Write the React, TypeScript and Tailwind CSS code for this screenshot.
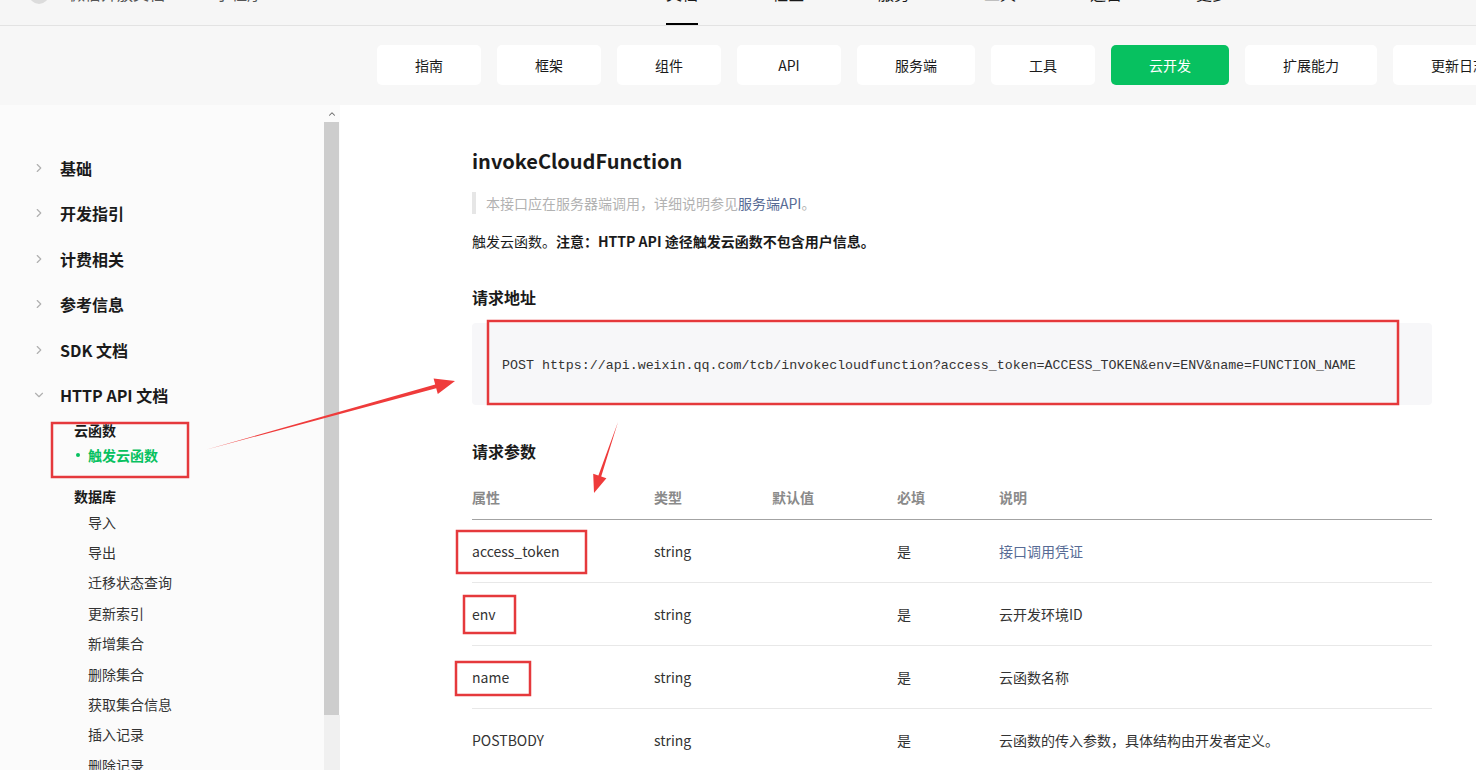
import { ChevronRight, ChevronDown, ChevronUp } from 'lucide-react';

const TABS = ['指南', '框架', '组件', 'API', '服务端', '工具', '云开发', '扩展能力', '更新日志'];
const TOP_NAV = ['文档', '社区', '服务', '工具', '运营', '更多'];
const SIDE_TOP = ['基础', '开发指引', '计费相关', '参考信息', 'SDK 文档'];
const DB_ITEMS = ['导入', '导出', '迁移状态查询', '更新索引', '新增集合', '删除集合', '获取集合信息', '插入记录', '删除记录', '更新记录'];

const PARAMS = [
  { name: 'access_token', type: 'string', req: '是', desc: '接口调用凭证', link: true },
  { name: 'env', type: 'string', req: '是', desc: '云开发环境ID', link: false },
  { name: 'name', type: 'string', req: '是', desc: '云函数名称', link: false },
  { name: 'POSTBODY', type: 'string', req: '是', desc: '云函数的传入参数，具体结构由开发者定义。', link: false },
];

function Header() {
  return (
    <header className="h-[26px] border-b border-[#e3e3e3] bg-[#f6f6f6] overflow-hidden flex">
      {/* logo, mostly scrolled out of view */}
      <div className="w-[666px] shrink-0 flex items-start h-[25px]">
        <div className="ml-[29px] -mt-[16px] w-[20px] h-[20px] rounded-full bg-[#dcdcdc]" />
        <span className="ml-[20px] -mt-[19px] leading-[24px] text-[16px] text-[#555]">微信开放文档</span>
        <span className="ml-[50px] -mt-[19px] leading-[24px] text-[16px] text-[#555]">小程序</span>
      </div>
      <nav className="flex gap-[74px]">
        {TOP_NAV.map((label, i) => (
          <div key={label} className="relative h-[25px] w-[32px]">
            <span className="block -mt-[19px] leading-[24px] text-[16px] text-[#1a1a1a]">{label}</span>
            {i === 0 && <span className="absolute left-0 bottom-0 w-[32px] h-[2px] bg-black" />}
          </div>
        ))}
      </nav>
    </header>
  );
}

function TabBar() {
  return (
    <div className="h-[79px] bg-[#f7f7f7] pt-[19px] overflow-hidden">
      <div className="flex gap-[16px] pl-[377px] w-max">
        {TABS.map((t) => (
          <div
            key={t}
            className={
              t === '云开发'
                ? 'h-[40px] min-w-[104px] px-[38px] rounded-[5px] bg-[#07c160] text-white text-[14px] flex items-center justify-center'
                : 'h-[40px] min-w-[104px] px-[38px] rounded-[5px] bg-white text-[#1a1a1a] text-[14px] flex items-center justify-center'
            }
          >
            {t}
          </div>
        ))}
      </div>
    </div>
  );
}

function Sidebar() {
  return (
    <aside className="w-[340px] shrink-0 flex bg-[#fbfbfb] overflow-hidden">
      <div className="w-[324px] pt-[40px]">
        {SIDE_TOP.map((label) => (
          <div key={label} className="h-[45.5px] flex items-center">
            <ChevronRight className="ml-[32px] w-[14px] h-[14px] text-[#b0b0b0]" strokeWidth={2} />
            <span className="ml-[14px] text-[16px] font-bold text-[#1a1a1a]">{label}</span>
          </div>
        ))}
        <div className="h-[45.5px] flex items-center">
          <ChevronDown className="ml-[32px] w-[14px] h-[14px] text-[#b0b0b0]" strokeWidth={2} />
          <span className="ml-[14px] text-[16px] font-bold text-[#1a1a1a]">HTTP API 文档</span>
        </div>
        <div className="pl-[74px]">
          <div className="h-[24px] leading-[24px] text-[14px] font-bold text-[#1a1a1a]">云函数</div>
          <div className="h-[26px] flex items-center text-[14px] font-bold text-[#07c160]">
            <span className="w-[4px] h-[4px] ml-[2px] rounded-full bg-[#07c160]" />
            <span className="ml-[8px]">触发云函数</span>
          </div>
          <div className="mt-[17px] h-[22px] leading-[22px] text-[14px] font-bold text-[#1a1a1a]">数据库</div>
          <div className="pl-[14px]">
            {DB_ITEMS.map((s) => (
              <div key={s} className="h-[30.4px] flex items-center text-[14px] text-[#333]">
                {s}
              </div>
            ))}
          </div>
        </div>
      </div>
      {/* scrollbar */}
      <div className="w-[16px] flex flex-col">
        <div className="h-[17px] flex items-center justify-center">
          <ChevronUp className="w-[10px] h-[10px] text-[#666]" strokeWidth={2.5} />
        </div>
        <div className="h-[593px] w-[15px] bg-[#cdcdcd]" />
        <div className="flex-1 bg-[#f0f0f0]" />
      </div>
    </aside>
  );
}

function Content() {
  return (
    <main className="flex-1 bg-white pl-[132px] pr-[44px] pt-[42px] overflow-hidden">
      <h1 className="h-[28px] leading-[28px] text-[20px] font-bold text-[#1a1a1a]">invokeCloudFunction</h1>
      <blockquote className="mt-[17px] h-[22px] border-l-4 border-[#e6e6e6] pl-[10px] flex items-center text-[14px] text-[#b2b2b2]">
        本接口应在服务器端调用，详细说明参见<span className="text-[#576b95]">服务端API</span>。
      </blockquote>
      <p className="mt-[16px] h-[22px] leading-[22px] text-[14px] text-[#1a1a1a]">
        触发云函数。<b className="font-bold">注意：HTTP API 途径触发云函数不包含用户信息。</b>
      </p>
      <h2 className="mt-[33px] h-[24px] leading-[24px] text-[16px] font-bold text-[#1a1a1a]">请求地址</h2>
      <div className="mt-[14px] h-[82px] rounded-[4px] bg-[#f7f7f9] px-[30px] pt-[3px] flex items-center">
        <code className="font-['Liberation_Mono',monospace] text-[13.3px] text-[#333] whitespace-nowrap">
          POST https://api.weixin.qq.com/tcb/invokecloudfunction?access_token=ACCESS_TOKEN&amp;env=ENV&amp;name=FUNCTION_NAME
        </code>
      </div>
      <h2 className="mt-[34px] h-[24px] leading-[24px] text-[16px] font-bold text-[#1a1a1a]">请求参数</h2>
      <div className="mt-[13px]">
        <div className="h-[44px] grid grid-cols-[182px_118px_125px_102px_1fr] items-center border-b border-[#a3a3a3] text-[14px] font-bold text-[#8a8a8a]">
          <span>属性</span>
          <span>类型</span>
          <span>默认值</span>
          <span>必填</span>
          <span>说明</span>
        </div>
        {PARAMS.map((p) => (
          <div
            key={p.name}
            className="h-[63px] grid grid-cols-[182px_118px_125px_102px_1fr] items-center border-b border-[#e8e8e8] text-[14px] text-[#333]"
          >
            <span>{p.name}</span>
            <span>{p.type}</span>
            <span />
            <span>{p.req}</span>
            <span className={p.link ? 'text-[#576b95]' : ''}>{p.desc}</span>
          </div>
        ))}
      </div>
    </main>
  );
}

function Annotations() {
  return (
    <svg className="absolute inset-0 pointer-events-none" width="1476" height="770" viewBox="0 0 1476 770">
      <g fill="none" stroke="#e5393c" strokeWidth="2.5">
        <rect x="52" y="423" width="136" height="54" />
        <rect x="488" y="321" width="910" height="83" />
        <rect x="457" y="531" width="129" height="42" />
        <rect x="464" y="596" width="51" height="37" />
        <rect x="456" y="662" width="74" height="33" />
      </g>
      <g fill="#ef3b3b">
        <polygon points="205,450 435.2,384.4 433.6,378.6 455,381 437.8,394 436.2,388.2" />
        <polygon points="618,422 598.4,475.5 593.2,473.8 594,493 606.4,478.2 601.2,476.5" />
      </g>
    </svg>
  );
}

export default function App() {
  return (
    <div className="relative w-[1476px] h-[770px] overflow-hidden flex flex-col font-['Noto_Sans_CJK_SC',sans-serif]">
      <Header />
      <TabBar />
      <div className="flex flex-1 min-h-0">
        <Sidebar />
        <Content />
      </div>
      <Annotations />
    </div>
  );
}
